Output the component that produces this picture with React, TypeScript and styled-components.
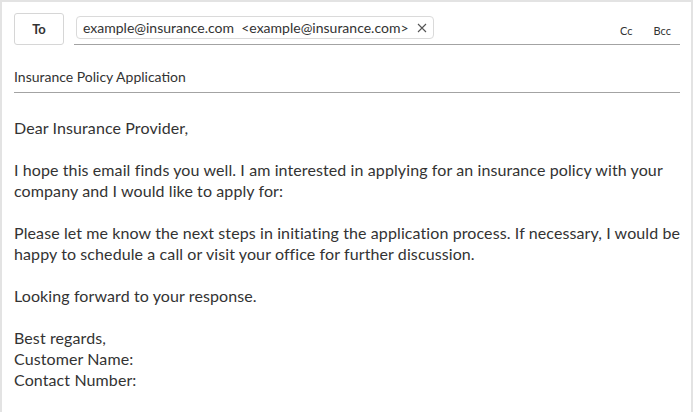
import React from "react";
import styled, { createGlobalStyle } from "styled-components";

const Global = createGlobalStyle`
  html, body { margin: 0; padding: 0; background: #fff; }
  body { font-family: "Segoe UI", Lato, "Open Sans", sans-serif; color: #333; }
  * { box-sizing: border-box; }
`;

const Frame = styled.div`
  min-height: 412px;
  border: 2px solid #e3e3e3;
  border-bottom: none;
  padding: 11px 11px 0 12px;
`;

const HeaderRow = styled.div`
  display: flex;
  align-items: flex-end;
`;

const ToButton = styled.button`
  width: 50px;
  height: 32px;
  border: 1px solid #d6d6d6;
  border-radius: 3px;
  background: #fff;
  font-family: inherit;
  font-size: 13px;
  font-weight: 700;
  color: #333;
  margin-right: 10px;
  padding: 0;
`;

const ToField = styled.div`
  flex: 1;
  height: 32px;
  display: flex;
  align-items: center;
  border-bottom: 1px solid #a3a3a3;
  padding-left: 2px;
  padding-bottom: 2px;
`;

const Chip = styled.div`
  display: flex;
  align-items: center;
  height: 23px;
  border: 1px solid #dadada;
  border-radius: 4px;
  padding: 0 6px 0 6px;
  font-size: 14px;
  color: #333;
  white-space: pre;
`;

const Remove = styled.span`
  display: inline-flex;
  margin-left: 8px;
  color: #555;
`;

const Spacer = styled.div`
  flex: 1;
`;

const CopyLink = styled.span<{ $last?: boolean }>`
  font-size: 11px;
  color: #333;
  margin-left: 21px;
  margin-right: ${(p) => (p.$last ? "9px" : "0")};
  padding-top: 6px;
`;

const Subject = styled.div`
  font-size: 14px;
  color: #333;
  padding: 23px 0 6px 0;
  line-height: 18px;
  border-bottom: 1px solid #a3a3a3;
`;

const Body = styled.div`
  padding: 24px 0 0 0;
  margin-right: -9px;
  font-size: 16px;
  line-height: 21px;
  letter-spacing: 0.1px;
  color: #333;
`;

const Para = styled.p`
  margin: 0 0 21px 0;
`;

export default function App() {
  return (
    <>
      <Global />
      <Frame>
        <HeaderRow>
          <ToButton>To</ToButton>
          <ToField>
            <Chip>
              {"example@insurance.com  <example@insurance.com>"}
              <Remove>
                <svg width="10" height="10" viewBox="0 0 10 10">
                  <path d="M1 1 L9 9 M9 1 L1 9" stroke="#555" strokeWidth="1.1" fill="none" />
                </svg>
              </Remove>
            </Chip>
            <Spacer />
            <CopyLink>Cc</CopyLink>
            <CopyLink $last>Bcc</CopyLink>
          </ToField>
        </HeaderRow>
        <Subject>Insurance Policy Application</Subject>
        <Body>
          <Para>Dear Insurance Provider,</Para>
          <Para>
            I hope this email finds you well. I am interested in applying for an insurance policy with your
            company and I would like to apply for:
          </Para>
          <Para>
            Please let me know the next steps in initiating the application process. If necessary, I would be
            happy to schedule a call or visit your office for further discussion.
          </Para>
          <Para>Looking forward to your response.</Para>
          <Para>
            Best regards,
            <br />
            Customer Name:
            <br />
            Contact Number:
          </Para>
        </Body>
      </Frame>
    </>
  );
}
